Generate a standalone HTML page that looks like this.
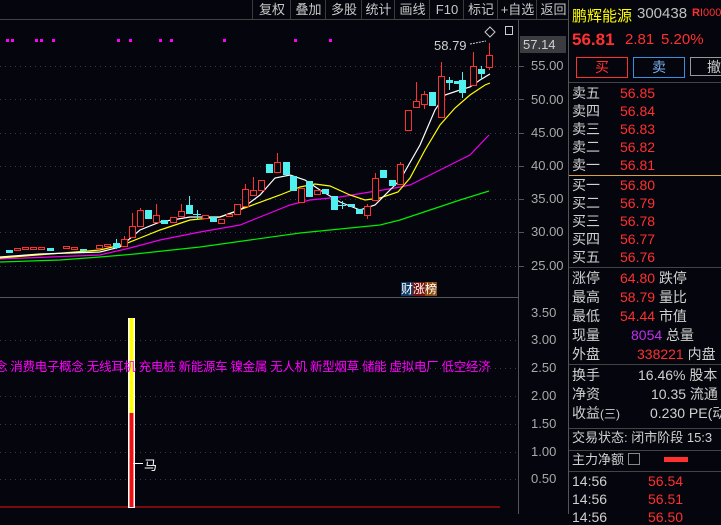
<!DOCTYPE html>
<html><head><meta charset="utf-8"><style>
body{margin:0;width:721px;height:514px;background:#05050d;overflow:hidden;position:relative;font-family:"Liberation Sans","Noto Sans CJK SC",sans-serif;}
.a{position:absolute;white-space:nowrap;}
.tb{position:absolute;top:0;height:19px;font-size:13px;color:#c8c8c8;line-height:19px;text-align:center;border-left:1px solid #3a3a3a;}
.r{position:absolute;left:572px;font-size:14px;color:#d0d0d0;line-height:16px;white-space:nowrap;}
.v{position:absolute;font-size:14px;line-height:16px;text-align:right;white-space:nowrap;}
.ax{position:absolute;left:531px;font-size:13px;color:#a8a8a8;line-height:14px;}
.hl{position:absolute;left:569px;width:152px;height:1px;background:#444;}
</style></head><body>
<!-- toolbar -->
<div class="a" style="left:252px;top:0;width:317px;height:19px;border-bottom:1px solid #444"></div>
<div class="a" style="left:0;top:19px;width:569px;height:1px;background:#444"></div>
<div class="tb" style="left:252px;width:38px">复权</div>
<div class="tb" style="left:290px;width:35px">叠加</div>
<div class="tb" style="left:325px;width:36px">多股</div>
<div class="tb" style="left:361px;width:33px">统计</div>
<div class="tb" style="left:394px;width:35px">画线</div>
<div class="tb" style="left:429px;width:34px">F10</div>
<div class="tb" style="left:463px;width:34px">标记</div>
<div class="tb" style="left:497px;width:39px">+自选</div>
<div class="tb" style="left:536px;width:33px">返回</div>
<!-- separators -->
<div class="a" style="left:518px;top:20px;width:1px;height:494px;background:#555"></div>
<div class="a" style="left:568px;top:0;width:1px;height:514px;background:#555"></div>
<div class="a" style="left:0;top:297px;width:518px;height:1px;background:#555"></div>
<div class="a" style="left:520px;top:36px;width:46px;height:17px;background:#3a3c40;color:#d0d0d0;font-size:13px;line-height:17px;padding-left:3px;box-sizing:border-box">57.14</div>
<div class="ax" style="top:59px">55.00</div>
<div class="ax" style="top:93px">50.00</div>
<div class="ax" style="top:126px">45.00</div>
<div class="ax" style="top:159px">40.00</div>
<div class="ax" style="top:192px">35.00</div>
<div class="ax" style="top:225px">30.00</div>
<div class="ax" style="top:259px">25.00</div>
<div class="ax" style="top:306px">3.50</div>
<div class="ax" style="top:333px">3.00</div>
<div class="ax" style="top:361px">2.50</div>
<div class="ax" style="top:389px">2.00</div>
<div class="ax" style="top:417px">1.50</div>
<div class="ax" style="top:445px">1.00</div>
<div class="ax" style="top:472px">0.50</div>
<svg class="a" style="left:0;top:0" width="569" height="514">
<g stroke="#3c3c3c" stroke-dasharray="1,4">
<line x1="0" y1="66.5" x2="518" y2="66.5"/><line x1="0" y1="99.5" x2="518" y2="99.5"/><line x1="0" y1="133.5" x2="518" y2="133.5"/><line x1="0" y1="166.5" x2="518" y2="166.5"/><line x1="0" y1="199.5" x2="518" y2="199.5"/><line x1="0" y1="232.5" x2="518" y2="232.5"/><line x1="0" y1="266.5" x2="518" y2="266.5"/>
<line x1="0" y1="340.5" x2="518" y2="340.5"/><line x1="0" y1="368.5" x2="518" y2="368.5"/><line x1="0" y1="396.5" x2="518" y2="396.5"/><line x1="0" y1="424.5" x2="518" y2="424.5"/><line x1="0" y1="452.5" x2="518" y2="452.5"/><line x1="0" y1="479.5" x2="518" y2="479.5"/>
</g>
<g stroke="#555"><line x1="519" y1="66.5" x2="524" y2="66.5"/><line x1="519" y1="99.5" x2="524" y2="99.5"/><line x1="519" y1="133.5" x2="524" y2="133.5"/><line x1="519" y1="166.5" x2="524" y2="166.5"/><line x1="519" y1="199.5" x2="524" y2="199.5"/><line x1="519" y1="232.5" x2="524" y2="232.5"/><line x1="519" y1="266.5" x2="524" y2="266.5"/></g>
<g fill="#ff00ff"><rect x="6" y="39" width="3" height="3"/><rect x="11" y="39" width="3" height="3"/><rect x="35" y="39" width="3" height="3"/><rect x="40" y="39" width="3" height="3"/><rect x="52" y="39" width="3" height="3"/><rect x="117" y="39" width="3" height="3"/><rect x="129" y="39" width="3" height="3"/><rect x="159" y="39" width="3" height="3"/><rect x="170" y="39" width="3" height="3"/><rect x="223" y="39" width="3" height="3"/><rect x="294" y="39" width="3" height="3"/><rect x="329" y="39" width="3" height="3"/></g>
<g fill="none" stroke-width="1.2">
<polyline stroke="#00ee00" points="0,262 60,260 100,257 135,254 200,247 250,240 300,233 350,228 380,225 400,220 430,210 460,200 489,191"/>
<polyline stroke="#ee00ee" points="0,259 100,255 130,248 160,240 200,232 240,225 270,213 290,205 310,200 340,197 370,192 395,188 410,185 430,175 450,165 470,155 489,135"/>
<polyline stroke="#ffff00" points="0,258 100,250 125,244 140,238 160,230 190,220 220,217 250,206 280,195 300,187 315,184 330,186 350,195 365,200 380,198 398,192 410,178 425,150 440,125 455,108 470,95 485,85 490,83"/>
<polyline stroke="#ffffff" points="0,257 40,254 100,252 120,247 140,230 160,222 190,217 220,217 240,210 260,195 275,178 290,175 305,180 320,190 340,202 360,210 375,205 390,190 400,180 420,145 435,110 445,95 460,90 470,87 480,80 490,74"/>
</g>
<g stroke="#ff3030" fill="#05050d">
<rect x="14.5" y="248.5" width="6" height="2"/><rect x="22.5" y="247.5" width="6" height="2"/><rect x="30.5" y="247.5" width="6" height="2"/><rect x="38.5" y="247.5" width="6" height="2"/><rect x="63.5" y="246.5" width="6" height="2"/><rect x="71.5" y="247.5" width="6" height="2"/><rect x="96.5" y="245.5" width="6" height="3"/><rect x="104.5" y="244.5" width="6" height="2"/>
<line x1="124.5" y1="236" x2="124.5" y2="246"/><rect x="121.5" y="239.5" width="6" height="7"/>
<line x1="132.5" y1="213" x2="132.5" y2="237"/><rect x="129.5" y="226.5" width="6" height="11"/>
<line x1="140.5" y1="208" x2="140.5" y2="226"/><rect x="137.5" y="210.5" width="6" height="16"/>
<line x1="156.5" y1="204" x2="156.5" y2="222"/><rect x="153.5" y="215.5" width="6" height="7"/>
<rect x="170.5" y="217.5" width="6" height="5"/><line x1="181.5" y1="204" x2="181.5" y2="216"/><rect x="178.5" y="211.5" width="6" height="5"/>
<rect x="202.5" y="215.5" width="6" height="3"/><rect x="218.5" y="219.5" width="6" height="4"/><rect x="226.5" y="214.5" width="6" height="2"/>
<rect x="234.5" y="204.5" width="6" height="10"/><line x1="245.5" y1="184" x2="245.5" y2="206"/><rect x="242.5" y="189.5" width="6" height="17"/>
<line x1="253.5" y1="177" x2="253.5" y2="195"/><rect x="250.5" y="190.5" width="6" height="5"/><rect x="258.5" y="180.5" width="6" height="10"/>
<line x1="277.5" y1="153" x2="277.5" y2="172"/><rect x="274.5" y="162.5" width="6" height="10"/>
<rect x="298.5" y="188.5" width="6" height="14"/><rect x="314.5" y="190.5" width="6" height="4"/>
<line x1="367.5" y1="204" x2="367.5" y2="219"/><rect x="364.5" y="206.5" width="6" height="9"/>
<line x1="375.5" y1="173" x2="375.5" y2="200"/><rect x="372.5" y="178.5" width="6" height="22"/>
<line x1="400.5" y1="162" x2="400.5" y2="184"/><rect x="397.5" y="164.5" width="6" height="20"/>
<rect x="405.5" y="110.5" width="6" height="20"/><line x1="416.5" y1="82" x2="416.5" y2="107"/><rect x="413.5" y="101.5" width="6" height="6"/>
<line x1="424.5" y1="91" x2="424.5" y2="109"/><rect x="421.5" y="94.5" width="6" height="10"/>
<line x1="441.5" y1="62" x2="441.5" y2="117"/><rect x="438.5" y="76.5" width="6" height="41"/>
<line x1="473.5" y1="52" x2="473.5" y2="85"/><rect x="470.5" y="66.5" width="6" height="19"/>
<line x1="489.5" y1="43" x2="489.5" y2="70"/><rect x="486.5" y="55.5" width="6" height="12"/>
</g>
<g fill="#50f0f0" stroke="#50f0f0">
<rect x="6.5" y="250.5" width="6" height="2"/><rect x="47.5" y="248.5" width="6" height="2"/><rect x="80.5" y="249.5" width="6" height="1"/>
<line x1="116.5" y1="239" x2="116.5" y2="249"/><rect x="113.5" y="243.5" width="6" height="4"/>
<rect x="145.5" y="210.5" width="6" height="8"/><rect x="161.5" y="220.5" width="6" height="3"/>
<line x1="189.5" y1="196" x2="189.5" y2="214"/><rect x="186.5" y="205.5" width="6" height="8"/>
<line x1="193" y1="214.5" x2="201" y2="214.5"/><line x1="197.5" y1="210" x2="197.5" y2="219"/>
<rect x="210.5" y="217.5" width="6" height="4"/>
<rect x="266.5" y="164.5" width="6" height="8"/><rect x="283.5" y="162.5" width="6" height="12"/>
<rect x="290.5" y="176.5" width="6" height="14"/><rect x="306.5" y="181.5" width="6" height="15"/>
<rect x="322.5" y="189.5" width="6" height="4"/><rect x="331.5" y="196.5" width="6" height="13"/>
<line x1="338" y1="205.5" x2="346" y2="205.5"/><line x1="342.5" y1="201" x2="342.5" y2="209"/>
<rect x="348.5" y="204.5" width="6" height="2"/><rect x="356.5" y="209.5" width="6" height="4"/>
<rect x="380.5" y="170.5" width="6" height="7"/><rect x="389.5" y="180.5" width="6" height="5"/>
<rect x="429.5" y="92.5" width="6" height="13"/><rect x="446.5" y="80.5" width="6" height="2"/><line x1="449.5" y1="77" x2="449.5" y2="90"/>
<rect x="454.5" y="81.5" width="6" height="2"/><line x1="462.5" y1="72" x2="462.5" y2="98"/><rect x="459.5" y="80.5" width="6" height="12"/>
<rect x="478.5" y="69.5" width="6" height="4"/><line x1="481.5" y1="66" x2="481.5" y2="80"/>
</g>
<polyline points="470,44 486,41" stroke="#ccc" fill="none" stroke-dasharray="2,1"/>
<polygon points="490,27 495,32 490,37 485,32" fill="none" stroke="#ccc"/>
<rect x="505.5" y="26.5" width="7" height="8" fill="none" stroke="#ccc"/>
<!-- lower -->
<line x1="0" y1="507" x2="500" y2="507" stroke="#ee1010"/>
<rect x="128" y="318" width="7" height="190" fill="#fff"/>
<rect x="129.5" y="318" width="4" height="95" fill="#ffff00"/>
<rect x="129.5" y="413" width="4" height="94" fill="#ee1010"/>
<line x1="133" y1="463.5" x2="143" y2="463.5" stroke="#fff"/>
</svg>
<div class="a" style="left:434px;top:38px;font-size:13px;color:#d0d0d0">58.79</div>
<div class="a" style="left:401px;top:282px;font-size:12px;line-height:14px;color:#fff"><span style="background:#123a66">财</span><span style="background:#7a1010">涨</span><span style="background:#8a4a10">榜</span></div>
<div class="a" style="left:-5px;top:356px;font-size:12.5px;color:#ff00ff;letter-spacing:-0.3px">念 消费电子概念 无线耳机 充电桩 新能源车 镍金属 无人机 新型烟草 储能 虚拟电厂 低空经济</div>
<div class="a" style="left:144px;top:455px;font-size:13px;color:#fff">马</div>
<!-- right panel -->
<div class="a" style="left:572px;top:5px;font-size:15px;color:#ffff00">鹏辉能源</div>
<div class="a" style="left:637px;top:5px;font-size:15px;color:#c0c0c0">300438</div>
<div class="a" style="left:692px;top:7px;font-size:11px;color:#ff3030;font-weight:bold">R<span style="font-weight:normal">I000</span></div>
<div class="a" style="left:572px;top:30px;font-size:17px;color:#ff3030;font-weight:bold">56.81</div>
<div class="a" style="left:625px;top:31px;font-size:15px;color:#ff3030">2.81</div>
<div class="a" style="left:661px;top:31px;font-size:15px;color:#ff3030">5.20%</div>
<div class="a" style="left:576px;top:57px;width:50px;height:19px;border:1px solid #ff3030;color:#ff3030;font-size:14px;text-align:center;line-height:19px">买</div>
<div class="a" style="left:633px;top:57px;width:50px;height:19px;border:1px solid #3a8ee0;color:#7ab0f0;font-size:14px;text-align:center;line-height:19px">卖</div>
<div class="a" style="left:690px;top:57px;width:40px;height:19px;border:1px solid #999;color:#ccc;font-size:14px;line-height:19px;padding-left:16px;box-sizing:border-box">撤</div>
<div class="hl" style="top:82px"></div>
<div class="r" style="top:85px">卖五</div><div class="v" style="left:620px;top:85px;color:#ff3030">56.85</div>
<div class="r" style="top:103px">卖四</div><div class="v" style="left:620px;top:103px;color:#ff3030">56.84</div>
<div class="r" style="top:121px">卖三</div><div class="v" style="left:620px;top:121px;color:#ff3030">56.83</div>
<div class="r" style="top:139px">卖二</div><div class="v" style="left:620px;top:139px;color:#ff3030">56.82</div>
<div class="r" style="top:157px">卖一</div><div class="v" style="left:620px;top:157px;color:#ff3030">56.81</div>
<div class="hl" style="top:175px;background:#d8a040"></div>
<div class="r" style="top:177px">买一</div><div class="v" style="left:620px;top:177px;color:#ff3030">56.80</div>
<div class="r" style="top:195px">买二</div><div class="v" style="left:620px;top:195px;color:#ff3030">56.79</div>
<div class="r" style="top:213px">买三</div><div class="v" style="left:620px;top:213px;color:#ff3030">56.78</div>
<div class="r" style="top:231px">买四</div><div class="v" style="left:620px;top:231px;color:#ff3030">56.77</div>
<div class="r" style="top:249px">买五</div><div class="v" style="left:620px;top:249px;color:#ff3030">56.76</div>
<div class="hl" style="top:267px"></div>
<div class="r" style="top:270px">涨停</div><div class="v" style="left:620px;top:270px;color:#ff3030">64.80 <span style="color:#d0d0d0">跌停</span></div>
<div class="r" style="top:289px">最高</div><div class="v" style="left:620px;top:289px;color:#ff3030">58.79 <span style="color:#d0d0d0">量比</span></div>
<div class="r" style="top:308px">最低</div><div class="v" style="left:620px;top:308px;color:#ff3030">54.44 <span style="color:#d0d0d0">市值</span></div>
<div class="r" style="top:327px">现量</div><div class="v" style="left:631px;top:327px;color:#c030f0">8054 <span style="color:#d0d0d0">总量</span></div>
<div class="r" style="top:346px">外盘</div><div class="v" style="left:637px;top:346px;color:#ff3030">338221 <span style="color:#d0d0d0">内盘</span></div>
<div class="hl" style="top:364px"></div>
<div class="r" style="top:367px">换手</div><div class="v" style="left:638px;top:367px;color:#d0d0d0">16.46% 股本</div>
<div class="r" style="top:386px">净资</div><div class="v" style="left:651px;top:386px;color:#d0d0d0">10.35 流通</div>
<div class="r" style="top:405px">收益<span style="font-size:12px">(三)</span></div><div class="v" style="left:650px;top:405px;color:#d0d0d0">0.230 PE(动</div>
<div class="hl" style="top:428px"></div>
<div class="r" style="top:430px;font-size:13px">交易状态: 闭市阶段 15:3</div>
<div class="hl" style="top:450px"></div>
<div class="r" style="top:452px;font-size:13px">主力净额 <span style="display:inline-block;width:10px;height:10px;border:1px solid #888;vertical-align:-1px"></span></div>
<div class="a" style="left:664px;top:457px;width:24px;height:5px;background:#ff3030"></div>
<div class="hl" style="top:471px"></div>
<div class="r" style="top:473px">14:56</div><div class="v" style="left:648px;top:473px;color:#ff3030">56.54</div>
<div class="r" style="top:491px">14:56</div><div class="v" style="left:648px;top:491px;color:#ff3030">56.51</div>
<div class="r" style="top:509px">14:56</div><div class="v" style="left:648px;top:509px;color:#ff3030">56.50</div>
</body></html>
